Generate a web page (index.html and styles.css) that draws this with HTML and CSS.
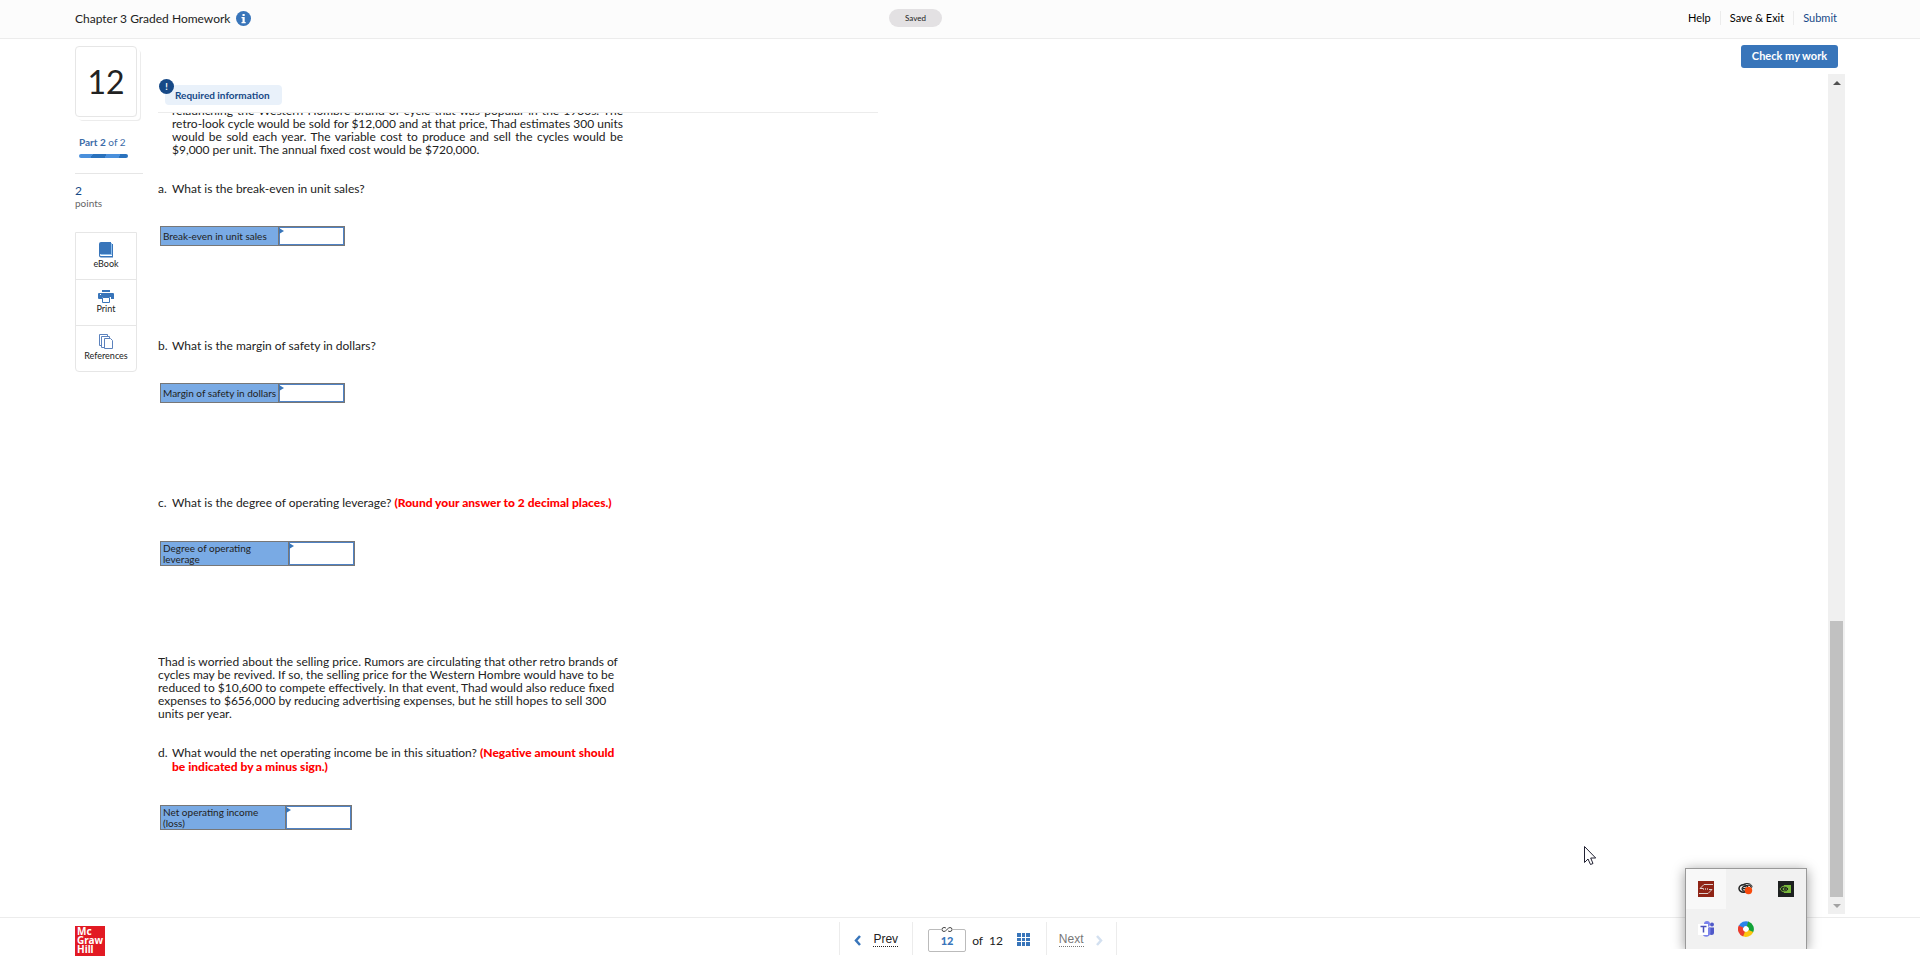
FILE: index.html
```
<!DOCTYPE html>
<html lang="en">
<head>
    <meta charset="UTF-8">
    <meta name="viewport" content="width=device-width, initial-scale=1.0">
    <title>Chapter 3 Graded Homework</title>
    <link rel="stylesheet" href="styles.css">
</head>
<body>
    <header class="topbar">
        <div class="topbar-title">
            <h1>Chapter 3 Graded Homework</h1>
            <button class="info-button" aria-label="Assignment information">
                <svg width="15" height="15" viewBox="0 0 15 15">
                    <circle cx="7.500" cy="7.500" r="7.500" fill="#3875ba"/>
                    <path d="M6.500 3h2.200v2H6.500zM5.500 6h3.200v5h1v1.200H5.500V11h1V7.200h-1z" fill="#fff"/>
                </svg>
            </button>
        </div>
        <span class="saved">Saved</span>
        <nav class="topbar-links">
            <a href="#help">Help</a>
            <a href="#exit">Save &amp; Exit</a>
            <a href="#submit" class="submit">Submit</a>
        </nav>
    </header>

    <div class="workspace">
        <aside class="sidebar">
            <div class="number-card">12</div>
            <div class="part">
                <div><b>Part 2</b> of 2</div>
                <div class="part-bar"></div>
            </div>
            <div class="points"><strong>2</strong>points</div>
            <div class="tools">
                <button>
                    <svg width="14" height="16" viewBox="0 0 14 16">
                        <path d="M2 0h10v12H2a1 1 0 0 0 0 2h11V2h1v13.500H2A2 2 0 0 1 0 13.500V2a2 2 0 0 1 2-2z" fill="#3875ba"/>
                        <path d="M12 1h1v12H2v-1h10z" fill="#8fc0ee"/>
                    </svg>
                    eBook
                </button>
                <button>
                    <svg width="16" height="13" viewBox="0 0 16 13">
                        <path d="M4 0h8v2H4zM1 3h14a1 1 0 0 1 1 1v5h-3V7H4v2H1a1 1 0 0 1-1-1V4a1 1 0 0 1 1-1z" fill="#3875ba"/>
                        <path d="M4.500 7.500h7v5h-7z" fill="#fff" stroke="#3875ba"/>
                        <path d="M2 4h1v1H2z" fill="#fff"/>
                    </svg>
                    Print
                </button>
                <button>
                    <svg width="14" height="16" viewBox="0 0 14 16" fill="#fff" stroke="#5c82bd">
                        <path d="M.5.5h8v11h-8z"/>
                        <path d="M2.500 2.500h8v11h-8z"/>
                        <path d="M5.500 4.500h6l2 2v8h-8z"/>
                    </svg>
                    References
                </button>
            </div>
        </aside>

        <main class="content">
            <button class="check-button">Check my work</button>
            <div class="required">
                <span class="required-label"><span class="required-mark">!</span>Required information</span>
            </div>
            <div class="scroller">
                <div class="question">
                    <p class="intro">relaunching the Western Hombre brand of cycle that was popular in the 1930s. The retro-look cycle would be sold for $12,000 and at that price, Thad estimates 300 units would be sold each year. The variable cost to produce and sell the cycles would be $9,000 per unit. The annual fixed cost would be $720,000.</p>

                    <p class="item"><span>a.</span><label for="breakeven">What is the break-even in unit sales?</label></p>
                    <table class="answer">
                        <tr><th>Break-even in unit sales</th><td><input type="text" id="breakeven"></td></tr>
                    </table>

                    <p class="item"><span>b.</span><label for="safety">What is the margin of safety in dollars?</label></p>
                    <table class="answer">
                        <tr><th>Margin of safety in dollars</th><td><input type="text" id="safety"></td></tr>
                    </table>

                    <p class="item"><span>c.</span><label for="leverage">What is the degree of operating leverage? <b>(Round your answer to 2 decimal places.)</b></label></p>
                    <table class="answer two-line wide">
                        <tr><th>Degree of operating<br>leverage</th><td><input type="text" id="leverage"></td></tr>
                    </table>

                    <p class="worry">Thad is worried about the selling price. Rumors are circulating that other retro brands of cycles may be revived. If so, the selling price for the Western Hombre would have to be reduced to $10,600 to compete effectively. In that event, Thad would also reduce fixed expenses to $656,000 by reducing advertising expenses, but he still hopes to sell 300 units per year.</p>

                    <p class="item"><span>d.</span><label for="income">What would the net operating income be in this situation? <b>(Negative amount should be indicated by a minus sign.)</b></label></p>
                    <table class="answer two-line">
                        <tr><th>Net operating income<br>(loss)</th><td><input type="text" id="income"></td></tr>
                    </table>
                </div>
            </div>
            <div class="scrollbar">
                <span class="arrow up"></span>
                <span class="track"><span class="thumb"></span></span>
                <span class="arrow down"></span>
            </div>
        </main>
    </div>

    <footer class="bottombar">
        <div class="logo">Mc<br>Graw<br>Hill</div>
        <nav class="pager">
            <a href="#prev" class="prev">
                <svg width="7" height="11" viewBox="0 0 7 11"><path d="M6 1L2 5.500 6 10" fill="none" stroke="#3875ba" stroke-width="2.500"/></svg>
                <span>Prev</span>
            </a>
            <div class="position">
                <div class="current">
                    <svg width="12" height="5" viewBox="0 0 12 5" fill="none" stroke="#444"><path d="M5 1.200C4.500.7 4 .5 3 .5a2 2 0 0 0 0 4c2 0 4-4 6-4a2 2 0 0 1 0 4c-1 0-1.500-.2-2-.7"/></svg>
                    <input type="text" value="12" aria-label="Question number">
                </div>
                <span>of&nbsp; 12</span>
                <button class="grid-button" aria-label="All questions">
                    <svg width="13" height="13" viewBox="0 0 13 13" fill="#3875ba"><path d="M0 0h4v4H0zM5 0h3v4H5zM9 0h4v4H9zM0 5h4v3H0zM5 5h3v3H5zM9 5h4v3H9zM0 9h4v4H0zM5 9h3v4H5zM9 9h4v4H9z"/></svg>
                </button>
            </div>
            <a href="#next" class="next">
                <span>Next</span>
                <svg width="7" height="11" viewBox="0 0 7 11"><path d="M1 1l4 4.500L1 10" fill="none" stroke="#d3e0f0" stroke-width="2.500"/></svg>
            </a>
        </nav>
    </footer>

    <!-- system tray flyout -->
    <div class="tray-clip">
        <div class="tray">
            <span class="tray-cell active">
                <svg width="16" height="16" viewBox="0 0 16 16"><path d="M0 0h16v16H0z" fill="#8f2416"/><path d="M15 3.500H6L2 7.500h3M1 12.500h9l4-4h-3" fill="none" stroke="#ddd0cd"/><path d="M5 8h6" stroke="#c59a93" stroke-width="2" stroke-dasharray="1 1"/></svg>
            </span>
            <span class="tray-cell">
                <svg width="16" height="16" viewBox="0 0 16 16" fill="none" stroke="#222"><ellipse cx="9" cy="5.500" rx="5" ry="3"/><ellipse cx="5.500" cy="7.500" rx="4.500" ry="3.800" fill="#eee" stroke-width="1.500"/><path d="M8 6a2.300 2.300 0 1 0 0 3.500M5 7.700h3M9 4.500c2-1 3.500 0 4 1.500" stroke-width="1.200"/><circle cx="10.500" cy="9.500" r="3.700" fill="#f84a0c" stroke="none"/></svg>
            </span>
            <span class="tray-cell">
                <svg width="16" height="16" viewBox="0 0 16 16"><path d="M0 0h16v16H0z" fill="#1d2020"/><path d="M6 4h7v8H6z" fill="#79b83c"/><path d="M2 8c2-3.500 6-4 9 0-3 4-7 3.500-9 0z" fill="#1d2020" stroke="#79b83c"/><path d="M4.500 8c1-2 3-2 4.500 0-1.500 2-3.500 2-4.500 0z" fill="#79b83c"/><circle cx="7" cy="8" r="1" fill="#1d2020"/></svg>
            </span>
            <span class="tray-cell">
                <svg width="16" height="16" viewBox="0 0 16 16"><circle cx="9" cy="3" r="3" fill="#7b83eb"/><circle cx="14" cy="3.500" r="2" fill="#5059c9"/><path d="M11 6.500h5v5a2.500 2.500 0 0 1-5 0z" fill="#5059c9"/><path d="M4 6.500h8.500v5a4.200 4.200 0 0 1-8.500 0z" fill="#7b83eb"/><path d="M0 3h10v11H0z" fill="#fff"/><path d="M2.500 5.500h6M5.500 5.500v6" stroke="#4b53bc" stroke-width="1.500"/></svg>
            </span>
            <span class="tray-cell">
                <svg width="16" height="16" viewBox="0 0 16 16" fill="none" stroke-width="5"><path d="M3 6A5.500 5.500 0 0 1 10 3" stroke="#2b83ea"/><path d="M9.500 2.800A5.500 5.500 0 0 1 12.500 11" stroke="#12a238"/><path d="M13 10a5.500 5.500 0 0 1-8 2.500" stroke="#fbc510"/><path d="M6 13.100A5.500 5.500 0 0 1 3 5.500" stroke="#ea3c2e"/><circle cx="8" cy="8" r="2.500" fill="#fff" stroke="none"/></svg>
            </span>
        </div>
    </div>
    <svg class="cursor" width="13" height="20" viewBox="0 0 13 20"><path d="M.5.5v16l3.500-3.500 2.500 5.500 2.500-1-2.300-5.500h5z" fill="#fff" stroke="#223"/></svg>
</body>
</html>
```
FILE: styles.css
```
* {
    box-sizing: border-box;
}
body {
    margin: 0;
    height: 100vh;
    display: flex;
    flex-direction: column;
    overflow: hidden;
    background: #fff;
    color: #222;
    font-family: Lato, "Open Sans", sans-serif;
    font-size: 12px;
    line-height: 13px;
}
h1, p {
    margin: 0;
}
a {
    color: inherit;
    text-decoration: none;
}
svg {
    display: block;
    flex: none;
}
button {
    padding: 0;
    border: 0;
    background: none;
    color: inherit;
    font-family: inherit;
}

/* top bar */
.topbar {
    display: grid;
    grid-template-columns: 1fr auto 1fr;
    align-items: center;
    height: 39px;
    padding: 0 75px 2px;
    background: #fcfcfc;
    border-bottom: 1px solid #ececec;
}
.topbar-title {
    display: flex;
    align-items: center;
    gap: 6px;
}
.topbar-title h1 {
    font-size: 12px;
    font-weight: 400;
}
.saved {
    margin-right: 89px;
    padding: 3px 16px 2px;
    border-radius: 9px;
    background: #e3e1e3;
    font-size: 8px;
}
.topbar-links {
    display: flex;
    justify-content: flex-end;
    padding-right: 8px;
    font-size: 11px;
    line-height: 14px;
    color: #000;
}
.topbar-links a {
    padding: 0 9px;
}
.topbar-links a:last-child {
    padding-right: 0;
}
.topbar-links a + a {
    border-left: 1px solid #ececec;
}
.topbar-links .submit {
    color: #164987;
}

/* workspace */
.workspace {
    flex: 1;
    min-height: 0;
    display: grid;
    grid-template-columns: 68px 1fr;
    column-gap: 15px;
    padding: 0 75px;
}
.sidebar {
    padding-top: 7px;
}
.number-card {
    width: 62px;
    height: 71px;
    border: 1px solid #e6e6e6;
    border-radius: 4px;
    box-shadow: 3px 3px 0 0 #fff, 4px 4px 0 0 #ececec;
    font-size: 32px;
    line-height: 69px;
    text-align: center;
}
.part {
    padding: 19px 0 15px 4px;
    border-bottom: 1px solid #e6e6e6;
    color: #3c6ca8;
    font-size: 10px;
}
.part-bar {
    width: 49px;
    height: 4px;
    margin-top: 5px;
    border-radius: 2px;
    background: repeating-linear-gradient(120deg, #4a90dc 0 12px, #2a72bd 12px 24px);
}
.points {
    padding: 10px 0 22px;
    color: #666;
    font-size: 10px;
}
.points strong {
    display: block;
    color: #164987;
    font-size: 12px;
    font-weight: 400;
}
.tools {
    width: 62px;
    border: 1px solid #e6e6e6;
    border-radius: 0 0 4px 4px;
}
.tools button {
    display: flex;
    flex-direction: column;
    align-items: center;
    justify-content: center;
    width: 100%;
    height: 46px;
    padding-bottom: 2px;
    font-size: 9px;
    line-height: 11px;
}
.tools button + button {
    border-top: 1px solid #e6e6e6;
}

/* question pane */
.content {
    display: grid;
    grid-template-columns: 1fr 17px;
    grid-template-rows: 35px 39px 1fr;
    min-height: 0;
    padding-bottom: 3px;
}
.check-button {
    grid-area: 1 / 1 / 2 / 3;
    justify-self: end;
    width: 97px;
    height: 23px;
    margin: 6px 7px 0 0;
    padding-bottom: 3px;
    border-radius: 3px;
    background: #3875ba;
    color: #fff;
    font-size: 11px;
    font-weight: 700;
}
.required {
    grid-area: 2 / 1;
    width: 720px;
    padding: 11px 0 0 7px;
    border-bottom: 1px solid #ececec;
}
.required-label {
    position: relative;
    display: inline-block;
    padding: 0 12px 0 10px;
    border-radius: 4px;
    background: #e9f1fa;
    color: #164987;
    font-size: 10px;
    font-weight: 700;
    line-height: 20px;
}
.required-mark {
    position: absolute;
    top: -6px;
    left: -6px;
    width: 15px;
    height: 15px;
    border-radius: 50%;
    background: #164987;
    color: #fff;
    font-size: 9px;
    line-height: 15px;
    text-align: center;
}
.scroller {
    grid-area: 3 / 1;
    overflow: hidden;
}
.question {
    width: 465px;
}
.intro {
    margin: -9px 0 26px 14px;
    text-align: justify;
}
.item {
    display: flex;
}
.item span {
    width: 14px;
    flex: none;
}
.item b {
    color: #f00;
    font-weight: 900;
}
.item:has(b) {
    line-height: 14px;
}
.answer {
    margin: 31px 0 93px 2px;
    border-collapse: collapse;
    border: 1px solid #777;
    font-size: 10px;
    line-height: 11px;
}
.answer th {
    width: 118px;
    padding: 0 2px;
    border: 1px solid #777;
    background: #79aae4;
    font-weight: 400;
    text-align: left;
    white-space: nowrap;
}
.answer td {
    position: relative;
    padding: 0;
}
.answer input {
    display: block;
    width: 65px;
    height: 18px;
    padding: 0 4px;
    border: 1px solid #4f82c4;
    background: #fff;
}
.answer td::before {
    content: "";
    position: absolute;
    top: 1px;
    left: 0;
    border: 3px solid transparent;
    border-left: 5px solid #3875ba;
    border-right: 0;
}
.answer.two-line {
    margin-bottom: 89px;
}
.answer.two-line th {
    width: 125px;
}
.answer.wide th {
    width: 128px;
}
.answer.two-line input {
    height: 23px;
}
.worry {
    margin-bottom: 26px;
}

.scrollbar {
    grid-area: 2 / 2 / 4 / 3;
    display: flex;
    flex-direction: column;
    align-items: center;
    background: #f0f0f0;
}
.arrow {
    margin: 7px 0 6px;
    border: 4px solid transparent;
}
.arrow.up {
    border-top: 0;
    border-bottom-color: #505050;
}
.arrow.down {
    border-bottom: 0;
    border-top-color: #a3a3a3;
}
.track {
    flex: 1;
    display: flex;
    align-items: flex-end;
}
.thumb {
    width: 13px;
    height: 276px;
    background: #c1c1c1;
}

/* bottom bar */
.bottombar {
    display: grid;
    grid-template-columns: 1fr auto 1fr;
    align-items: start;
    height: 44px;
    padding: 0 75px;
    border-top: 1px solid #ececec;
}
.logo {
    width: 30px;
    height: 30px;
    margin-top: 8px;
    padding: 1px 2px;
    background: #e21a23;
    color: #fff;
    font-family: "Noto Sans", sans-serif;
    font-size: 10px;
    font-weight: 700;
    line-height: 9px;
}
.pager {
    display: flex;
    height: 33px;
    margin-top: 4px;
    padding-left: 36px;
}
.pager > * {
    display: flex;
    align-items: center;
    border-left: 1px solid #ececec;
}
.prev, .next {
    gap: 12px;
    padding: 3px 14px 0;
    font-family: "Liberation Sans", sans-serif;
}
.prev span, .next span {
    border-bottom: 1px dotted;
}
.pager .next {
    padding: 3px 13px 0 12px;
    border-right: 1px solid #ececec;
    color: #777;
}
.position {
    gap: 6px;
    padding: 4px 16px 0 15px;
}
.current {
    position: relative;
}
.current svg {
    position: absolute;
    top: -2px;
    left: 13px;
    background: #fff;
}
.current input {
    display: block;
    width: 38px;
    height: 23px;
    padding: 0;
    border: 1px solid #bbb;
    border-radius: 2px;
    color: #3875ba;
    font-family: inherit;
    font-size: 11px;
    font-weight: 900;
    text-align: center;
}
.grid-button {
    margin: 0 0 2px 8px;
}

/* tray flyout and pointer float over the page */
.tray-clip {
    position: absolute;
    right: 93px;
    bottom: 12px;
    padding: 20px 20px 0;
    overflow: hidden;
}
.tray {
    display: grid;
    grid-template-columns: repeat(3, 40px);
    grid-auto-rows: 40px;
    border: 1px solid #999;
    border-bottom: 0;
    background: #f1f1f1;
    box-shadow: 0 2px 12px rgba(0, 0, 0, 0.4);
}
.tray-cell {
    display: flex;
    align-items: center;
    justify-content: center;
}
.tray-cell.active {
    background: #f8f8f8;
}
.cursor {
    position: absolute;
    left: 1584px;
    top: 846px;
}
```
